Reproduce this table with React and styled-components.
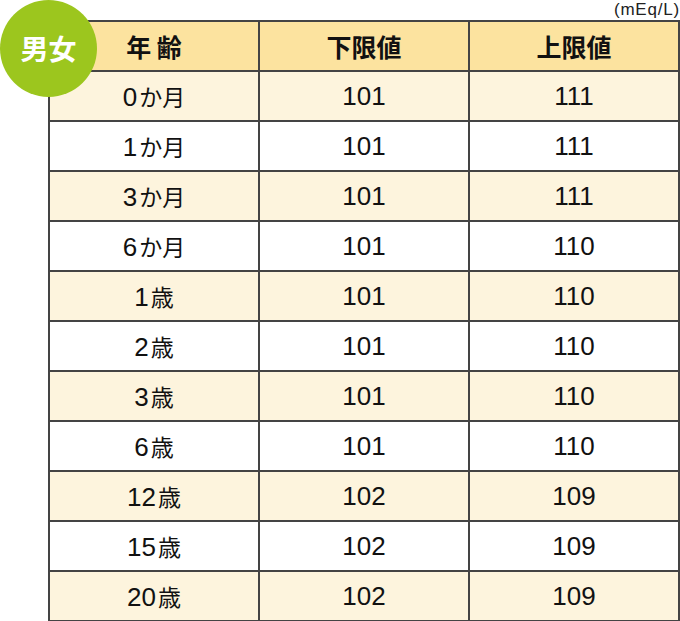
import React from 'react';
import styled, { createGlobalStyle } from 'styled-components';

const GlobalStyle = createGlobalStyle`
  body {
    margin: 0;
    background: #fff;
    font-family: "Liberation Sans", "Noto Sans CJK JP", sans-serif;
  }
`;

const rows = [
    ['0', 'か月', '101', '111'],
    ['1', 'か月', '101', '111'],
    ['3', 'か月', '101', '111'],
    ['6', 'か月', '101', '110'],
    ['1', '歳', '101', '110'],
    ['2', '歳', '101', '110'],
    ['3', '歳', '101', '110'],
    ['6', '歳', '101', '110'],
    ['12', '歳', '102', '109'],
    ['15', '歳', '102', '109'],
    ['20', '歳', '102', '109'],
];

const App = () => {
    return (
        <Page>
            <GlobalStyle/>
            <Unit>(mEq/L)</Unit>
            <Badge>男女</Badge>
            <Table>
                <thead>
                <tr>
                    <Head>年 齢</Head>
                    <Head>下限値</Head>
                    <Head>上限値</Head>
                </tr>
                </thead>
                <tbody>
                {rows.map((r, i) => (
                    <Row key={i} shaded={i % 2 === 0}>
                        <Cell>{r[0]}<Suffix>{r[1]}</Suffix></Cell>
                        <Cell>{r[2]}</Cell>
                        <Cell>{r[3]}</Cell>
                    </Row>
                ))}
                </tbody>
            </Table>
        </Page>
    );
};
export default App;

const Page = styled.div`
  position: relative;
  width: 680px;
  height: 621px;
  padding-left: 48px;
  box-sizing: border-box;
`;

const Unit = styled.div`
  height: 20px;
  text-align: right;
  font-size: 17px;
  letter-spacing: 0.8px;
  line-height: 20px;
  padding-right: 0;
  color: #222;
`;

const Badge = styled.div`
  position: absolute;
  left: 0;
  top: 0;
  width: 97px;
  height: 97px;
  border-radius: 50%;
  background: #9cc61e;
  color: #fff;
  display: flex;
  align-items: center;
  justify-content: center;
  font-family: "Noto Sans CJK JP", sans-serif;
  font-weight: 700;
  font-size: 28px;
  padding-bottom: 2px;
  box-sizing: border-box;
  z-index: 2;
`;

const Table = styled.table`
  width: 632px;
  border-collapse: collapse;
  border: 2px solid #333;
  table-layout: fixed;
  font-size: 26px;
  color: #111;
`;

const Head = styled.th`
  height: 48px;
  background: #fce39f;
  border: 2px solid #444;
  font-family: "Noto Sans CJK JP", sans-serif;
  font-weight: 700;
  font-size: 25px;
  text-align: center;
  padding: 0;
`;

const Row = styled.tr`
  background: ${p => (p.shaded ? '#fdf4dd' : '#fff')};
`;

const Cell = styled.td`
  height: 48px;
  border: 2px solid #444;
  text-align: center;
  padding: 0;
`;

const Suffix = styled.span`
  font-family: "Noto Sans CJK JP", sans-serif;
  font-size: 23px;
  margin-left: 2px;
`;
